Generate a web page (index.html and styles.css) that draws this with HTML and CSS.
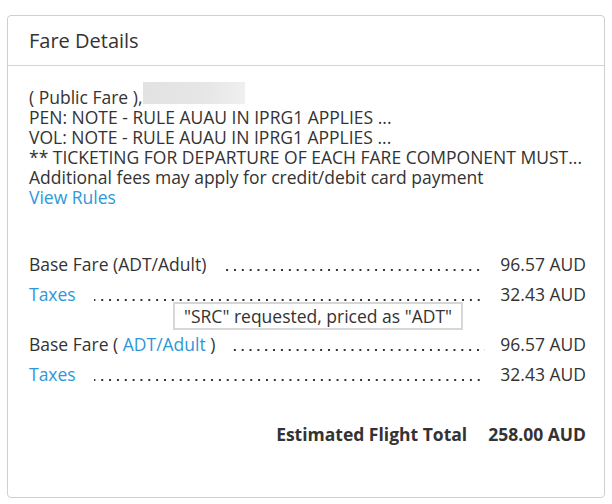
FILE: index.html
```html
<!DOCTYPE html>
<html>
<head>
<meta charset="utf-8">
<link rel="stylesheet" href="styles.css">
</head>
<body>
<div class="card">
  <div class="card-header">Fare Details</div>
  <div class="card-body">
    <div class="notes">
      <div>( Public Fare ),<span class="redacted"></span></div>
      <div>PEN: NOTE - RULE AUAU IN IPRG1 APPLIES ...</div>
      <div>VOL: NOTE - RULE AUAU IN IPRG1 APPLIES ...</div>
      <div>** TICKETING FOR DEPARTURE OF EACH FARE COMPONENT MUST...</div>
      <div>Additional fees may apply for credit/debit card payment</div>
      <div><a class="link" href="#">View Rules</a></div>
    </div>
    <div class="fares">
      <div class="group">
        <div class="row"><span class="label">Base Fare (ADT/Adult)</span><span class="dots"></span><span class="amount">96.57 AUD</span></div>
        <div class="row"><a class="label link" href="#">Taxes</a><span class="dots"></span><span class="amount">32.43 AUD</span></div>
      </div>
      <div class="group second">
        <div class="tooltip">"SRC" requested, priced as "ADT"</div>
        <div class="row"><span class="label">Base Fare ( <a class="link" href="#">ADT/Adult</a> )</span><span class="dots"></span><span class="amount">96.57 AUD</span></div>
        <div class="row"><a class="label link" href="#">Taxes</a><span class="dots"></span><span class="amount">32.43 AUD</span></div>
      </div>
    </div>
    <div class="total"><span>Estimated Flight Total</span><span>258.00 AUD</span></div>
  </div>
</div>
</body>
</html>
```
FILE: styles.css
```css
html, body {
  margin: 0;
  padding: 0;
  background: #fff;
}
body {
  font-family: "Open Sans", "Liberation Sans", sans-serif;
  font-size: 17.5px;
  color: #333;
  padding: 15px 7px 0 7px;
}
.card {
  box-sizing: border-box;
  width: 598px;
  height: 483px;
  border: 1px solid #cfcfcf;
  border-radius: 4px;
  display: flex;
  flex-direction: column;
}
.card-header {
  box-sizing: border-box;
  height: 50px;
  padding: 0 21px;
  display: flex;
  align-items: center;
  font-size: 20px;
  border-bottom: 1px solid #d6d6d6;
}
.card-body {
  padding: 21px 18px 0 21px;
}
.notes {
  line-height: 20px;
}
.link {
  color: #2e98d8;
  text-decoration: none;
}
.redacted {
  display: inline-block;
  width: 102px;
  height: 22px;
  margin: -6px 0 0 1px;
  vertical-align: baseline;
  background: linear-gradient(100deg, #e2e2e2, #e6e6e6 60%, #f0f0f0);
}
.fares {
  margin-top: 47px;
}
.group {
  display: flex;
  flex-direction: column;
  gap: 10px;
}
.group.second {
  position: relative;
  margin-top: 30px;
}
.row {
  display: flex;
  align-items: baseline;
  line-height: 20px;
}
.dots {
  flex: 1;
  height: 2px;
  margin: 0 15px 0 18px;
  background-image: linear-gradient(to right, #333 2px, transparent 2px);
  background-size: 7.85px 2px;
  background-repeat: repeat-x;
  background-position: right 0;
}
.amount {
  white-space: nowrap;
}
.tooltip {
  position: absolute;
  left: 144px;
  top: -32px;
  box-sizing: border-box;
  height: 28px;
  padding: 0 9px;
  display: flex;
  align-items: center;
  border: 2px solid #d7d7d7;
  background: #fff;
  white-space: nowrap;
  color: #333;
}
.total {
  margin-top: 40px;
  display: flex;
  justify-content: flex-end;
  gap: 21px;
  font-weight: 700;
  line-height: 20px;
}
```
